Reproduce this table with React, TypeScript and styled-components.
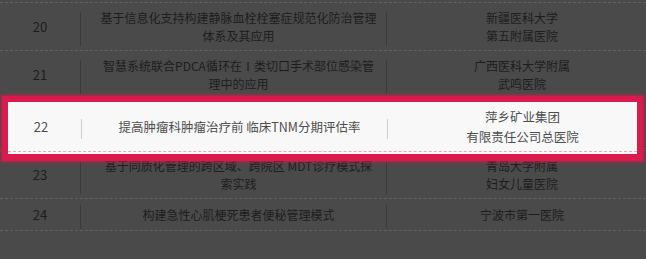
import React from 'react'
import styled, { createGlobalStyle } from 'styled-components'

const GlobalStyle = createGlobalStyle`
    html, body {
        margin: 0;
        padding: 0;
        background: #4a4a4a;
    }
    body {
        font-family: "Noto Sans CJK SC", "Noto Sans", sans-serif;
    }
`

const Table = styled.div`
    width: 646px;
    height: 259px;
    padding-top: 2px;
    box-sizing: border-box;
    overflow: hidden;
    display: flex;
    flex-direction: column;
`

const Row = styled.div<{ $h: number; $last?: boolean }>`
    height: ${p => p.$h}px;
    box-sizing: border-box;
    border-top: 1px dashed #626262;
    border-bottom: ${p => (p.$last ? '1px dashed #626262' : 'none')};
    display: grid;
    grid-template-columns: 80px 1px 305px 1px 1fr;
    align-items: center;
    color: #1d1d1d;
    font-size: 12px;
    line-height: 18px;
`

const Highlight = styled.div`
    position: relative;
    z-index: 1;
    margin: -2px 3px -11px 2px;
    height: 65px;
    box-sizing: border-box;
    border: 6px solid #d81a4c;
    border-bottom-width: 7px;
    box-shadow: 0 0 3px 1px rgba(216, 26, 76, 0.85);
    background: #f8f8f8;
    padding-bottom: 2px;
`

const HighlightRow = styled.div`
    height: 50px;
    box-sizing: border-box;
    border-bottom: 1px dashed #e2aabb;
    display: grid;
    grid-template-columns: 73px 1px 305px 1px 1fr;
    align-items: center;
    color: #4d4d4d;
    font-size: 12.5px;
    line-height: 20px;
`

const Num = styled.div<{ $shift?: number }>`
    text-align: center;
    font-size: 13px;
    padding-right: ${p => p.$shift || 0}px;
`

const Divider = styled.div<{ $h: number; $light?: boolean; $offset?: number }>`
    width: 1px;
    height: ${p => p.$h}px;
    margin-top: ${p => p.$offset || 0}px;
    background: ${p => (p.$light ? '#cfcfcf' : '#3a3a3a')};
`

const Title = styled.div`
    text-align: center;
    padding-left: 10px;
`

const Org = styled.div<{ $pad: number }>`
    text-align: center;
    padding-left: ${p => p.$pad}px;
`

type Item = {
    no: string
    title: React.ReactNode
    org: React.ReactNode
    h: number
}

const before: Item[] = [
    {
        no: '20',
        title: <>基于信息化支持构建静脉血栓栓塞症规范化防治管理<br />体系及其应用</>,
        org: <>新疆医科大学<br />第五附属医院</>,
        h: 48,
    },
    {
        no: '21',
        title: <>智慧系统联合PDCA循环在Ⅰ类切口手术部位感染管<br />理中的应用</>,
        org: <>广西医科大学附属<br />武鸣医院</>,
        h: 48,
    },
]

const after: Item[] = [
    {
        no: '23',
        title: <>基于同质化管理的跨区域、跨院区 MDT诊疗模式探<br />索实践</>,
        org: <>青岛大学附属<br />妇女儿童医院</>,
        h: 48,
    },
    {
        no: '24',
        title: '构建急性心肌梗死患者便秘管理模式',
        org: '宁波市第一医院',
        h: 33,
    },
]

const renderRow = (item: Item, last = false) => (
    <Row key={item.no} $h={item.h} $last={last}>
        <Num>{item.no}</Num>
        <Divider $h={item.h > 40 ? 34 : 24} $offset={4} />
        <Title>{item.title}</Title>
        <Divider $h={item.h > 40 ? 34 : 24} $offset={4} />
        <Org $pad={11}>{item.org}</Org>
    </Row>
)

const App = () => {
    return (
        <>
            <GlobalStyle />
            <Table>
                {before.map(item => renderRow(item))}
                <Highlight>
                    <HighlightRow>
                        <Num $shift={7}>22</Num>
                        <Divider $h={20} $light $offset={4} />
                        <Title>提高肿瘤科肿瘤治疗前 临床TNM分期评估率</Title>
                        <Divider $h={20} $light $offset={4} />
                        <Org $pad={20}>萍乡矿业集团<br />有限责任公司总医院</Org>
                    </HighlightRow>
                </Highlight>
                {after.map((item, i) => renderRow(item, i === after.length - 1))}
            </Table>
        </>
    )
}

export default App
